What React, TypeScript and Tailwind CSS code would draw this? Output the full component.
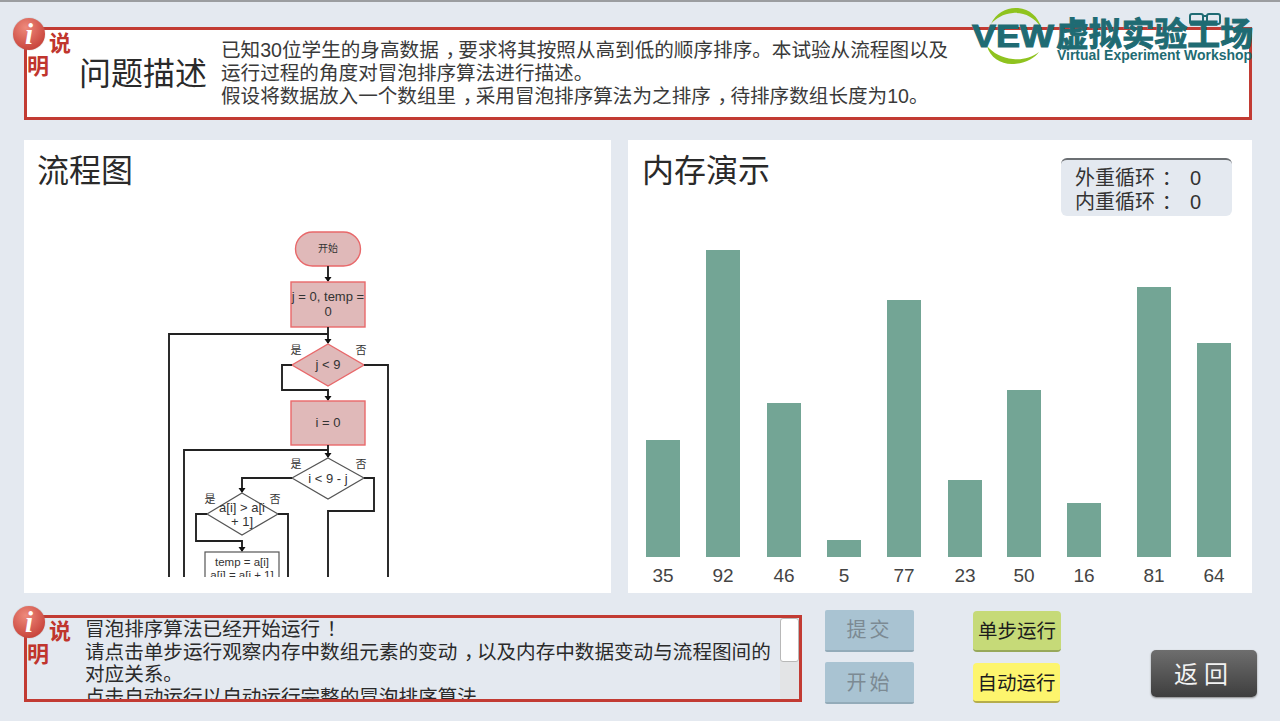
const cjk = "font-['Liberation_Sans','Noto_Sans_CJK_SC',sans-serif]";

const bars = [
  { v: 35, h: 117, ml: 'ml-[18px]' },
  { v: 92, h: 307, ml: 'ml-[26px]' },
  { v: 46, h: 154, ml: 'ml-[27px]' },
  { v: 5, h: 17, ml: 'ml-[26px]' },
  { v: 77, h: 257, ml: 'ml-[26px]' },
  { v: 23, h: 77, ml: 'ml-[27px]' },
  { v: 50, h: 167, ml: 'ml-[25px]' },
  { v: 16, h: 54, ml: 'ml-[26px]' },
  { v: 81, h: 270, ml: 'ml-[36px]' },
  { v: 64, h: 214, ml: 'ml-[26px]' },
];

function Mark({ c }: { c: string }) {
  return <span className="ml-[0.34em] tracking-[-0.34em]">{c}</span>;
}

function Badge() {
  return (
    <div className="absolute left-[0px] top-[2px] w-[48px] text-[#c0352d] font-bold text-[22px] leading-[23px] indent-[22px]">
      <div className="absolute left-[-14px] top-[-14px] w-[32px] h-[32px] rounded-full bg-[radial-gradient(circle_at_40%_30%,#ee8a7c,#c9463d_75%)] flex items-center justify-center shadow-[0_0_1px_#888]">
        <span className="font-['Liberation_Serif',serif] italic font-bold text-white text-[29px] leading-none indent-0">i</span>
      </div>
      说明
    </div>
  );
}

function Logo() {
  return (
    <svg className="absolute left-[945px] top-[-27px] overflow-visible" width="290" height="70" viewBox="972 3 290 70">
      <path d="M991 24 C996 12 1008 7 1018 8 C1030 9 1038 17 1041 27 C1034 17 1024 12 1013 13 C1003 14 996 18 991 24 Z" fill="#8fc31f" />
      <path d="M987 46 C990 58 1002 65 1014 64 C1026 63 1035 58 1039 52 C1031 58 1022 60 1013 59 C1002 58 993 53 987 46 Z" fill="#8fc31f" />
      <text x="972" y="47" fontFamily="Liberation Sans" fontWeight="700" fontSize="31" fill="#1f6b73" stroke="#1f6b73" strokeWidth="1" textLength="82" lengthAdjust="spacingAndGlyphs">VEW</text>
      <text x="1056" y="46" fontFamily="Noto Sans CJK SC" fontWeight="700" fontSize="33" fill="#1f6b73" stroke="#1f6b73" strokeWidth="1" textLength="197" lengthAdjust="spacingAndGlyphs">虚拟实验工场</text>
      <g fill="none" stroke="#1f6b73" strokeWidth="2">
        <rect x="1190" y="14" width="13" height="10" rx="2" />
        <rect x="1207" y="14" width="13" height="10" rx="2" />
        <path d="M1203 16 H1207" />
      </g>
      <text x="1057" y="60" fontFamily="Liberation Sans" fontWeight="700" fontSize="14" fill="#1f6b73" textLength="195" lengthAdjust="spacingAndGlyphs">Virtual Experiment Workshop</text>
    </svg>
  );
}

function Flow() {
  const line = { fill: 'none', stroke: '#222', strokeWidth: 1.9 };
  const pink = { fill: '#e0b9b9', stroke: '#e8686a', strokeWidth: 1.4 };
  const gray = { fill: '#fff', stroke: '#555', strokeWidth: 1.2 };
  const arrow = (x: number, y: number) => <path d={`M${x - 3.5} ${y - 5} H${x + 3.5} L${x} ${y} Z`} fill="#111" />;
  const txt = { fontFamily: 'Liberation Sans, Noto Sans CJK SC, sans-serif', fill: '#333', textAnchor: 'middle' as const };
  return (
    <svg className="block" width="587" height="372" viewBox="24 205 587 372">
      <rect x="295.5" y="232" width="65" height="34" rx="17" {...pink} />
      <path d="M328 266 V281" {...line} />{arrow(328, 282)}
      <rect x="291" y="282" width="74" height="45" {...pink} />
      <path d="M328 327 V343 M169 577 V334 H328" {...line} />{arrow(328, 344)}
      <path d="M328 344 L364 365 L328 386 L292 365 Z" {...pink} />
      <path d="M292 365 H282 V390 H328 V400 M364 365 H388 V577" {...line} />{arrow(328, 401)}
      <rect x="291" y="401" width="74" height="44" {...pink} />
      <path d="M328 445 V457 M184 577 V450 H328" {...line} />{arrow(328, 458)}
      <path d="M328 458 L364 478 L328 499 L292 478 Z" {...gray} />
      <path d="M364 478 H374 V511 H328 V577 M292 478 H242 V492" {...line} />{arrow(242, 493)}
      <path d="M242 493 L278 514 L242 535 L207 514 Z" {...gray} />
      <path d="M207 514 H196 V541 H242 V551 M278 514 H288 V577" {...line} />{arrow(242, 552)}
      <rect x="205" y="552" width="74" height="40" {...gray} />
      <text x="328" y="252" fontSize="10" {...txt}>开始</text>
      <text x="328" y="301" fontSize="13" {...txt}>j = 0, temp =</text>
      <text x="328" y="316" fontSize="13" {...txt}>0</text>
      <text x="328" y="369" fontSize="13" {...txt}>j &lt; 9</text>
      <text x="328" y="427" fontSize="13" {...txt}>i = 0</text>
      <text x="328" y="483" fontSize="13" {...txt}>i &lt; 9 - j</text>
      <text x="242" y="512" fontSize="13" {...txt}>a[i] &gt; a[i</text>
      <text x="242" y="526" fontSize="13" {...txt}>+ 1]</text>
      <text x="242" y="566" fontSize="11.5" {...txt}>temp = a[i]</text>
      <text x="242" y="579" fontSize="11.5" {...txt}>a[i] = a[i + 1]</text>
      <text x="296" y="354" fontSize="11" {...txt}>是</text>
      <text x="361" y="354" fontSize="11" {...txt}>否</text>
      <text x="296" y="468" fontSize="11" {...txt}>是</text>
      <text x="361" y="468" fontSize="11" {...txt}>否</text>
      <text x="210" y="503" fontSize="11" {...txt}>是</text>
      <text x="275" y="503" fontSize="11" {...txt}>否</text>
    </svg>
  );
}

export default function App() {
  return (
    <div className={`${cjk} w-[1280px] h-[721px] overflow-hidden bg-[#e4e9f0] border-t-2 border-[#9b9da0] text-[#333]`}>
      <header className="relative ml-[24px] mt-[25px] w-[1228px] h-[93px] bg-white border-[3px] border-[#c23b33] flex items-center">
        <Badge />
        <h1 className="ml-[52px] w-[142px] shrink-0 text-[32px] leading-none text-[#2a2a2a] font-normal">问题描述</h1>
        <p className="text-[19.6px] leading-[23px] text-[#3a3a3a] w-[740px] whitespace-nowrap">
          已知30位学生的身高数据<Mark c="，" />要求将其按照从高到低的顺序排序。本试验从流程图以及
          <br />运行过程的角度对冒泡排序算法进行描述。
          <br />假设将数据放入一个数组里<Mark c="，" />采用冒泡排序算法为之排序<Mark c="，" />待排序数组长度为10。
        </p>
        <Logo />
      </header>

      <main className="ml-[24px] mt-[20px] flex gap-[17px]">
        <section className="w-[587px] h-[453px] bg-white overflow-hidden">
          <h2 className="h-[65px] pl-[13px] pt-[11px] text-[32px] leading-[40px] font-normal text-[#2a2a2a]">流程图</h2>
          <Flow />
        </section>
        <section className="w-[624px] h-[453px] bg-white flex flex-col">
          <div className="flex justify-between h-[76px] pl-[14px] pr-[20px]">
            <h2 className="pt-[11px] text-[32px] leading-[40px] font-normal text-[#2a2a2a]">内存演示</h2>
            <div className="mt-[18px] w-[171px] h-[58px] rounded-[6px] bg-[#e4e9f0] border-t-2 border-[#6b6f73] pl-[14px] pt-[6px] text-[20px] leading-[24px] text-[#333]">
              <div className="flex"><span className="w-[115px]">外重循环<Mark c="：" /></span><span>0</span></div>
              <div className="flex"><span className="w-[115px]">内重循环<Mark c="：" /></span><span>0</span></div>
            </div>
          </div>
          <div className="h-[341px] flex items-end">
            {bars.map((b) => (
              <div key={b.v} className={`${b.ml} w-[34px] bg-[#73a595]`} style={{ height: b.h }} />
            ))}
          </div>
          <div className="flex mt-[7px] text-[19px] leading-[24px] text-[#444]">
            {bars.map((b) => (
              <div key={b.v} className={`${b.ml} w-[34px] text-center`}>{b.v}</div>
            ))}
          </div>
        </section>
      </main>

      <footer className="ml-[24px] mt-[17px] flex items-start">
        <div className="relative mt-[5px] w-[778px] h-[87px] border-[3px] border-[#c23b33] flex">
          <Badge />
          <div className="ml-[58px] w-[690px] mr-[5px] h-[81px] overflow-hidden text-[19.6px] leading-[22.5px] text-[#2a2a2a]">
            <p>冒泡排序算法已经开始运行<Mark c="！" /></p>
            <p>请点击单步运行观察内存中数组元素的变动<Mark c="，" />以及内存中数据变动与流程图间的对应关系。</p>
            <p>点击自动运行以自动运行完整的冒泡排序算法。</p>
          </div>
          <div className="w-[19px] h-[81px] bg-[#e3e4e6] rounded-[2px]">
            <div className="h-[44px] bg-white border border-[#b8b8b8] rounded-[3px]" />
          </div>
        </div>

        <div className="ml-[23px] flex flex-col gap-[10px]">
          <button className="w-[89px] h-[42px] rounded-[2px] bg-[#a9c3d2] border-b-2 border-[#93abb9] text-[#7c8a93] text-[20px] tracking-[3px]">提交</button>
          <button className="w-[89px] h-[42px] pt-[2px] rounded-[2px] bg-[#a9c3d2] border-b-2 border-[#93abb9] text-[#7c8a93] text-[20px] tracking-[3px]">开始</button>
        </div>

        <div className="ml-[59px] flex flex-col gap-[11px] mt-[1px]">
          <button className="w-[88px] h-[41px] pt-[3px] rounded-[4px] bg-[#c6da78] border-b-2 border-[#97a85a] text-[#1c1c1c] text-[19.5px] leading-none">单步运行</button>
          <button className="w-[87px] h-[40px] pt-[3px] rounded-[4px] bg-[#fdf56d] border-b-2 border-[#b5ad4b] text-[#1c1c1c] text-[19.5px] leading-none">自动运行</button>
        </div>

        <button className="ml-[90px] mt-[40px] w-[106px] h-[47px] pt-[3px] rounded-[5px] bg-[linear-gradient(#6e6e6e,#3e3e3e)] shadow-[0_1px_2px_#888] text-[#f2f2f2] text-[24px] tracking-[6px]">返回</button>
      </footer>
    </div>
  );
}
